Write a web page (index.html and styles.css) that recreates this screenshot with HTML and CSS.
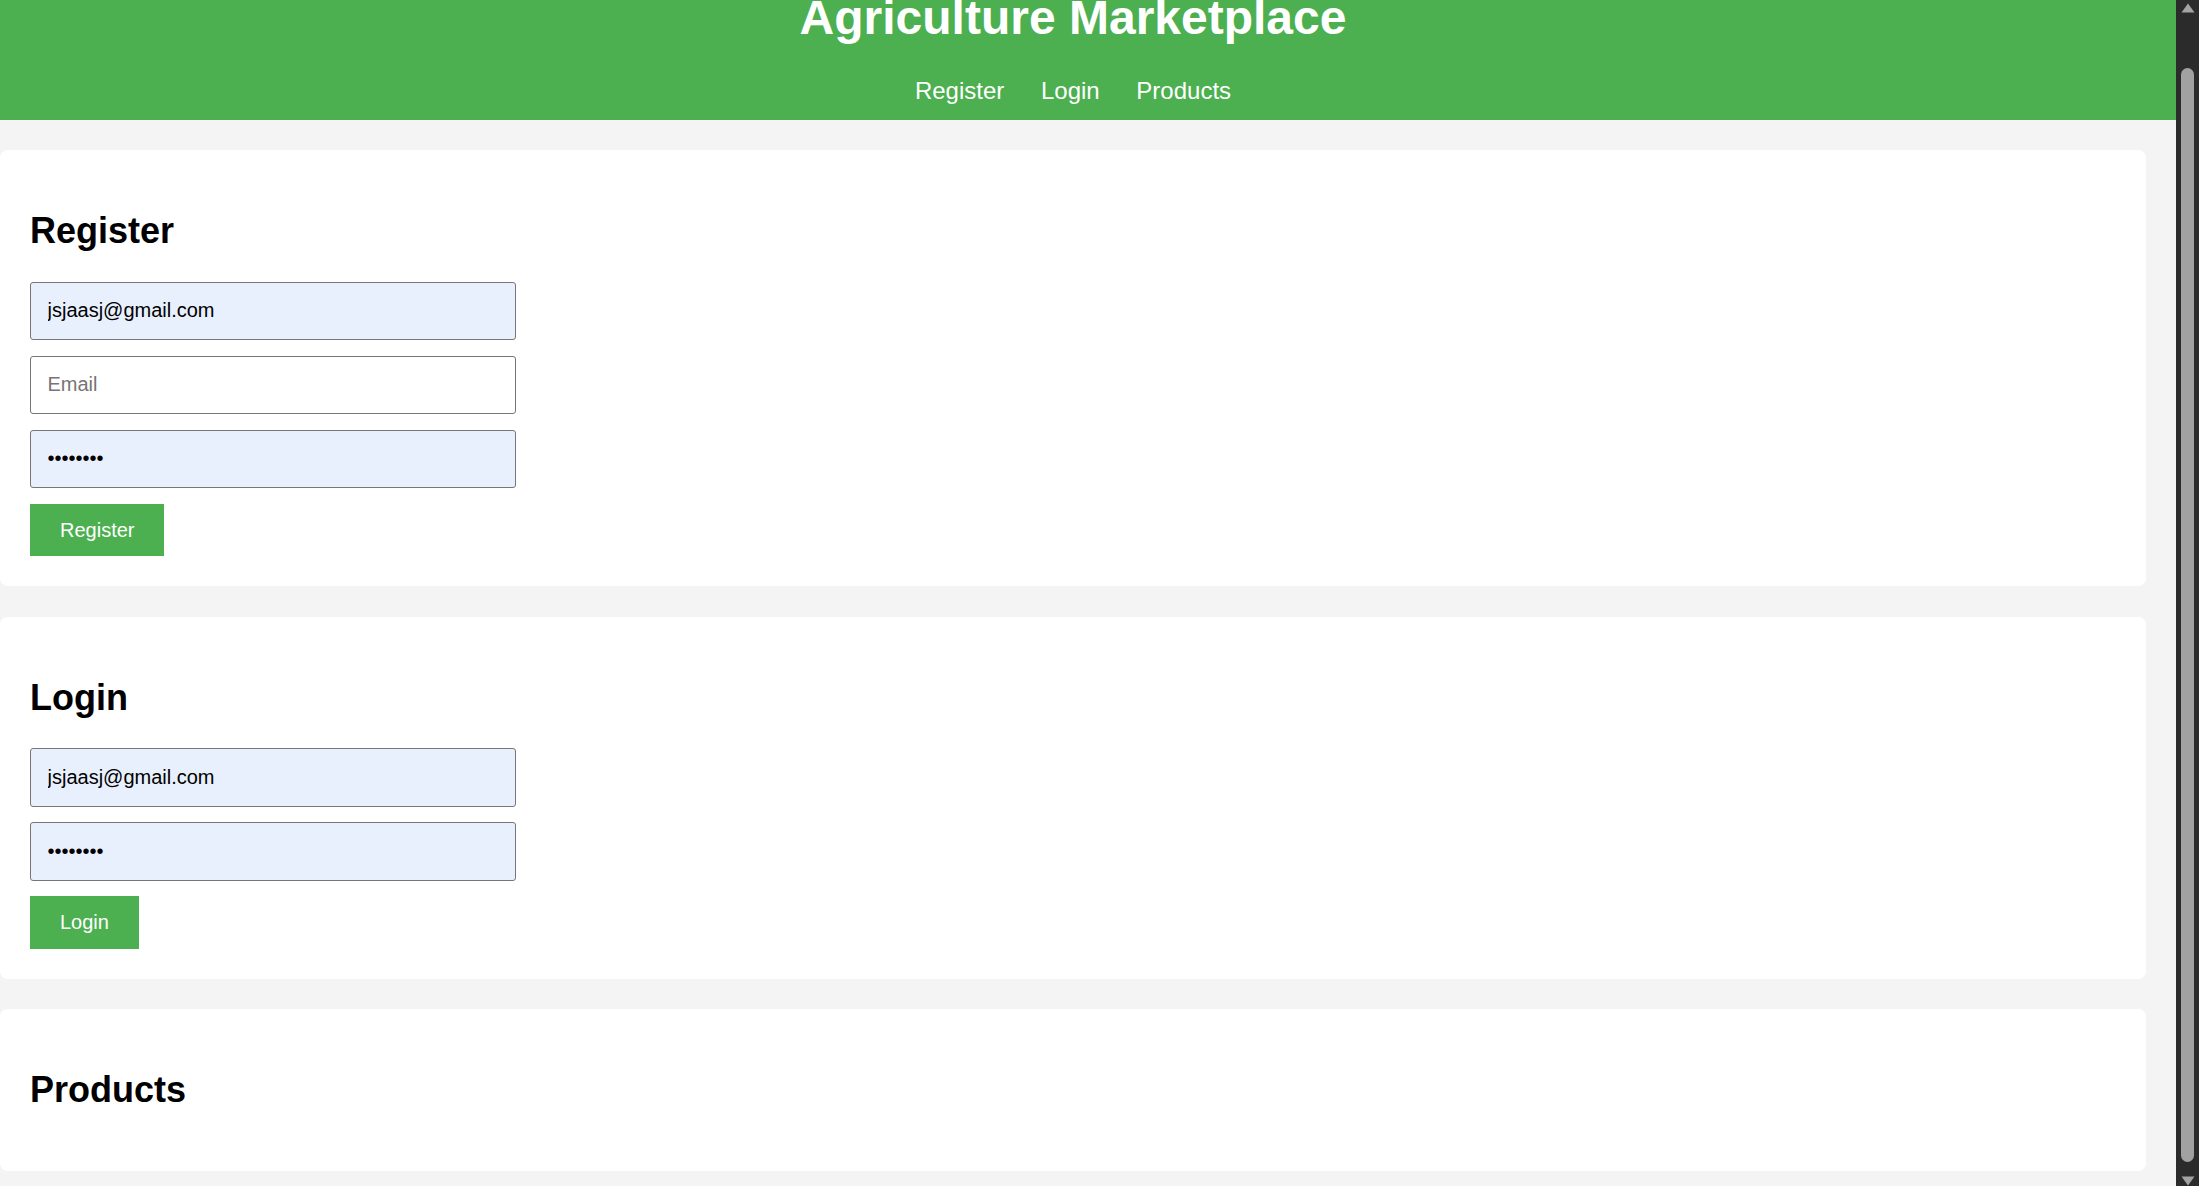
FILE: index.html
```html
<!DOCTYPE html>
<html lang="en">
<head>
<meta charset="utf-8">
<title>Agriculture Marketplace</title>
<link rel="stylesheet" href="styles.css">
</head>
<body>
<div class="page">
  <header class="site-header">
    <h1 class="site-title">Agriculture Marketplace</h1>
    <nav class="site-nav">
      <a href="#register">Register</a>
      <a href="#login">Login</a>
      <a href="#products">Products</a>
    </nav>
  </header>
  <main class="main">
    <section class="card" id="register">
      <h2 class="card-title">Register</h2>
      <form class="form">
        <input class="field filled" type="text" value="jsjaasj@gmail.com">
        <input class="field" type="email" placeholder="Email">
        <input class="field filled" type="password" value="12345678">
        <button class="btn" type="button">Register</button>
      </form>
    </section>
    <section class="card" id="login">
      <h2 class="card-title">Login</h2>
      <form class="form">
        <input class="field filled" type="text" value="jsjaasj@gmail.com">
        <input class="field filled" type="password" value="12345678">
        <button class="btn" type="button">Login</button>
      </form>
    </section>
    <section class="card" id="products">
      <h2 class="card-title">Products</h2>
    </section>
  </main>
</div>
<div class="scrollbar">
  <div class="sb-arrow sb-up">
    <svg width="14" height="10" viewBox="0 0 14 10"><path d="M7 0.5 L13.5 9.5 L0.5 9.5 Z" fill="#a3a3a3"/></svg>
  </div>
  <div class="sb-thumb"></div>
  <div class="sb-arrow sb-down">
    <svg width="14" height="10" viewBox="0 0 14 10"><path d="M0.5 0.5 L13.5 0.5 L7 9.5 Z" fill="#a3a3a3"/></svg>
  </div>
</div>
</body>
</html>
```

FILE: styles.css
```css
* { box-sizing: border-box; }

html, body {
  margin: 0;
  padding: 0;
  height: 100%;
}

body {
  display: flex;
  height: 100vh;
  overflow: hidden;
  background: #f4f4f4;
  font-family: "Liberation Sans", Arial, sans-serif;
  color: #000;
}

.page {
  flex: 1;
  min-width: 0;
  overflow: hidden;
}

.site-header {
  background: #4caf50;
  color: #fff;
  text-align: center;
  padding: 0 30px 15px 0;
}

.site-title {
  margin: 0 0 42.4px;
  font-size: 48px;
  font-weight: 700;
  line-height: 35px;
}

.site-nav {
  font-size: 24px;
  line-height: 27.6px;
}

.site-nav a {
  color: #fff;
  text-decoration: none;
  margin: 0 15px;
}

.main {
  display: flex;
  flex-direction: column;
  gap: 30.3px;
  padding: 30px 30px 0 0;
}

.card {
  background: #fff;
  border-radius: 7.5px;
  padding: 30px;
}

.card-title {
  margin: 29.9px 0;
  font-size: 36px;
  font-weight: 700;
  line-height: 41.4px;
}

.form {
  padding-top: 0.6px;
}

.field {
  display: block;
  width: 485.5px;
  height: 58.3px;
  margin: 0 0 15.7px;
  padding: 0 15px 0 16.5px;
  border: 1.5px solid #767676;
  border-radius: 3px;
  background: #fff;
  font-family: "Liberation Sans", Arial, sans-serif;
  font-size: 20px;
  color: #000;
  outline: none;
}

.field::placeholder {
  color: #757575;
}

.field.filled {
  background: #e8f0fe;
}

.btn {
  display: block;
  height: 52.7px;
  padding: 0 30px;
  border: none;
  background: #4caf50;
  color: #fff;
  font-family: "Liberation Sans", Arial, sans-serif;
  font-size: 20px;
  line-height: 23px;
}

.scrollbar {
  flex: 0 0 23px;
  width: 23px;
  background: #2b2b2b;
  display: flex;
  flex-direction: column;
  align-items: center;
  overflow: hidden;
}

.sb-arrow {
  height: 10px;
  display: flex;
  justify-content: center;
}

.sb-arrow svg { display: block; }

.sb-up {
  margin-top: 3px;
  margin-bottom: 55px;
}

.sb-thumb {
  width: 13px;
  height: 1098px;
  background: #a1a1a1;
  border-radius: 6.5px;
}

.sb-down {
  margin-top: 14px;
}
```
